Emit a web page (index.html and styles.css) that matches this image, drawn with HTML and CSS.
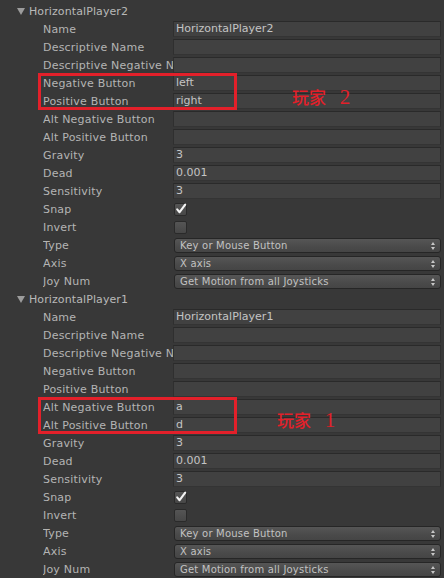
FILE: index.html
```html
<!DOCTYPE html>
<html>
<head>
<meta charset="utf-8">
<link rel="stylesheet" href="styles.css">
</head>
<body>
<div class="inspector">
  <div class="header"><span class="tri"></span><span class="htext">HorizontalPlayer2</span></div>
  <div class="row"><span class="label">Name</span><span class="field">HorizontalPlayer2</span></div>
  <div class="row"><span class="label">Descriptive Name</span><span class="field"></span></div>
  <div class="row"><span class="label">Descriptive Negative N</span><span class="field"></span></div>
  <div class="group">
    <div class="row"><span class="label">Negative Button</span><span class="field">left</span></div>
    <div class="row"><span class="label">Positive Button</span><span class="field">right</span></div>
    <span class="note note2">玩家&nbsp; <span class="num">2</span></span>
  </div>
  <div class="row"><span class="label">Alt Negative Button</span><span class="field"></span></div>
  <div class="row"><span class="label">Alt Positive Button</span><span class="field"></span></div>
  <div class="row"><span class="label">Gravity</span><span class="field">3</span></div>
  <div class="row"><span class="label">Dead</span><span class="field">0.001</span></div>
  <div class="row"><span class="label">Sensitivity</span><span class="field">3</span></div>
  <div class="row"><span class="label">Snap</span><span class="check on"><svg width="12" height="12" viewBox="0 0 12 12"><path d="M2.2 6.4 L4.6 9.2 L10.2 1.6" fill="none" stroke="#f4f4f4" stroke-width="2.1" stroke-linecap="round" stroke-linejoin="round"/></svg></span></div>
  <div class="row"><span class="label">Invert</span><span class="check"></span></div>
  <div class="row"><span class="label">Type</span><span class="popup">Key or Mouse Button<span class="arr"></span></span></div>
  <div class="row"><span class="label">Axis</span><span class="popup">X axis<span class="arr"></span></span></div>
  <div class="row"><span class="label">Joy Num</span><span class="popup">Get Motion from all Joysticks<span class="arr"></span></span></div>

  <div class="header"><span class="tri"></span><span class="htext">HorizontalPlayer1</span></div>
  <div class="row"><span class="label">Name</span><span class="field">HorizontalPlayer1</span></div>
  <div class="row"><span class="label">Descriptive Name</span><span class="field"></span></div>
  <div class="row"><span class="label">Descriptive Negative N</span><span class="field"></span></div>
  <div class="row"><span class="label">Negative Button</span><span class="field"></span></div>
  <div class="row"><span class="label">Positive Button</span><span class="field"></span></div>
  <div class="group">
    <div class="row"><span class="label">Alt Negative Button</span><span class="field">a</span></div>
    <div class="row"><span class="label">Alt Positive Button</span><span class="field">d</span></div>
    <span class="note note1">玩家&nbsp; <span class="num">1</span></span>
  </div>
  <div class="row"><span class="label">Gravity</span><span class="field">3</span></div>
  <div class="row"><span class="label">Dead</span><span class="field">0.001</span></div>
  <div class="row"><span class="label">Sensitivity</span><span class="field">3</span></div>
  <div class="row"><span class="label">Snap</span><span class="check on"><svg width="12" height="12" viewBox="0 0 12 12"><path d="M2.2 6.4 L4.6 9.2 L10.2 1.6" fill="none" stroke="#f4f4f4" stroke-width="2.1" stroke-linecap="round" stroke-linejoin="round"/></svg></span></div>
  <div class="row"><span class="label">Invert</span><span class="check"></span></div>
  <div class="row"><span class="label">Type</span><span class="popup">Key or Mouse Button<span class="arr"></span></span></div>
  <div class="row"><span class="label">Axis</span><span class="popup">X axis<span class="arr"></span></span></div>
  <div class="row"><span class="label">Joy Num</span><span class="popup">Get Motion from all Joysticks<span class="arr"></span></span></div>
</div>
</body>
</html>
```
FILE: styles.css
```css
html, body {
  margin: 0;
  padding: 0;
  background: #383838;
}
body {
  width: 444px;
  height: 578px;
  overflow: hidden;
  font-family: "DejaVu Sans", Verdana, sans-serif;
  font-size: 11px;
  color: #b4b4b4;
}
.inspector {
  padding-top: 2px;
}
.header {
  height: 18px;
  display: flex;
  align-items: center;
  padding-left: 17px;
}
.tri {
  width: 0;
  height: 0;
  border-left: 4px solid transparent;
  border-right: 4px solid transparent;
  border-top: 7px solid #9c9c9c;
  margin-right: 4px;
  margin-top: 1px;
}
.htext {
  color: #b8b8b8;
  letter-spacing: 0.1px;
}
.row {
  height: 18px;
  display: flex;
  align-items: center;
  padding-left: 43px;
}
.label {
  width: 130px;
  flex: none;
  white-space: nowrap;
  overflow: hidden;
  letter-spacing: 0.2px;
}
.field {
  box-sizing: border-box;
  width: 268px;
  height: 16px;
  background: #414141;
  border: 1px solid #2f2f2f;
  border-top-color: #2a2a2a;
  border-bottom-color: #343434;
  color: #c4c4c4;
  padding-left: 2px;
  line-height: 14px;
  white-space: nowrap;
  overflow: hidden;
}
.check {
  box-sizing: border-box;
  width: 13px;
  height: 13px;
  margin-left: 1px;
  border-radius: 2px;
  background: linear-gradient(#555, #474747);
  border: 1px solid #2a2a2a;
  position: relative;
}
.check svg {
  position: absolute;
  left: 0;
  top: -1px;
}
.popup {
  box-sizing: border-box;
  position: relative;
  width: 267px;
  height: 15px;
  margin-left: 1px;
  border-radius: 3px;
  background: linear-gradient(#565656, #4a4a4a 60%, #454545);
  border: 1px solid #262626;
  color: #c2c2c2;
  font-size: 10px;
  line-height: 13px;
  padding-left: 5px;
  letter-spacing: 0.2px;
  white-space: nowrap;
}
.arr {
  position: absolute;
  right: 5px;
  top: 3px;
  width: 4px;
  height: 8px;
}
.arr::before, .arr::after {
  content: "";
  position: absolute;
  left: 0;
  border-left: 2px solid transparent;
  border-right: 2px solid transparent;
}
.arr::before {
  top: 0;
  border-bottom: 3px solid #c8c8c8;
}
.arr::after {
  top: 5px;
  border-top: 3px solid #c8c8c8;
}
.group {
  position: relative;
}
.group::after {
  content: "";
  position: absolute;
  left: 38px;
  top: -1px;
  width: 193px;
  height: 31px;
  border: 3px solid #e3202a;
}
.note {
  position: absolute;
  font-family: "Noto Sans CJK SC", serif;
  font-size: 17px;
  font-weight: 500;
  color: #e3202a;
  line-height: 20px;
  white-space: nowrap;
}
.num {
  font-family: "Liberation Serif", serif;
  font-size: 21px;
  font-weight: 400;
  margin-left: 6px;
}
.note2 {
  left: 292px;
  top: 13px;
}
.note1 {
  left: 277px;
  top: 12px;
}
```
